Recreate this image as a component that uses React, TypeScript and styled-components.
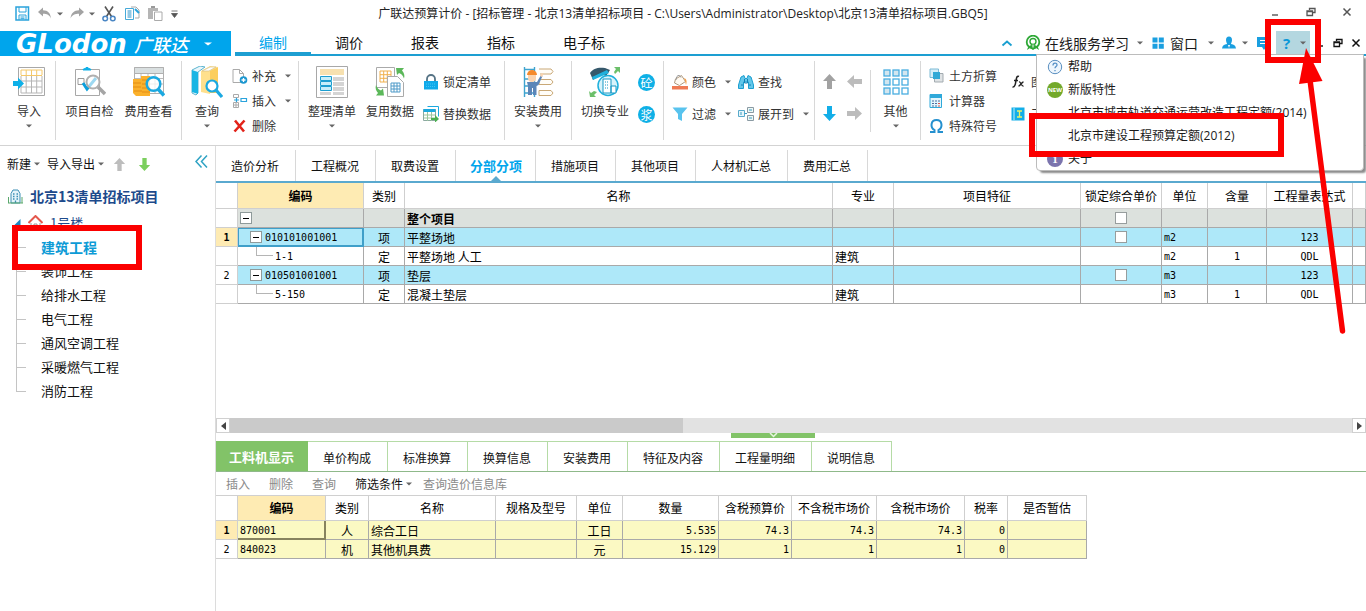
import React from "react";
import styled, { createGlobalStyle, css } from "styled-components";

const GlobalStyle = createGlobalStyle`
  * { box-sizing: border-box; }
  body {
    margin: 0;
    background: #fff;
    color: #1a1a1a;
    font-family: "Noto Sans CJK SC", sans-serif;
    font-size: 12px;
    line-height: 18px;
    overflow: hidden;
  }
  button {
    margin: 0;
    padding: 0;
    border: 0;
    background: none;
    color: inherit;
    font: inherit;
    white-space: nowrap;
  }
  svg { display: block; flex: none; }
`;

const BLUE = "#00a5ec";
const RED = "#fb0000";

/* ---------- shell ---------- */

const Page = styled.div`
  display: flex;
  flex-direction: column;
  min-height: 100vh;
`;

const TitleBar = styled.header`
  display: grid;
  grid-template-columns: 1fr auto 1fr;
  align-items: center;
  height: 31px;
  padding-bottom: 4px;
`;

const QuickAccess = styled.div`
  display: flex;
  align-items: center;
  padding-left: 15px;
`;

const QuickButton = styled.button<{ $gap?: number }>`
  display: flex;
  align-items: center;
  margin-right: ${(p) => p.$gap ?? 8}px;
`;

const WindowTitle = styled.h1`
  margin: 0;
  font-family: "Open Sans", "Noto Sans CJK SC", sans-serif;
  font-size: 12px;
  font-weight: 400;
  color: #222;
  white-space: nowrap;
`;

const WindowButtons = styled.div`
  display: flex;
  justify-content: flex-end;
  align-items: center;
  gap: 26px;
  padding: 0 14px 4px 0;
`;

const MenuBar = styled.div`
  position: relative;
  z-index: 5;
  display: flex;
  height: 25px;
`;

const Brand = styled.button`
  display: flex;
  align-items: center;
  width: 231px;
  padding-left: 16px;
  background: ${BLUE};
  color: #fff;
  text-align: left;
`;

const BrandLatin = styled.span`
  width: 118px;
  font: italic 700 26px/24px "DejaVu Sans", sans-serif;
`;

const BrandHan = styled.span`
  width: 70px;
  font-size: 18px;
  font-style: italic;
  font-weight: 500;
  line-height: 24px;
`;

const MenuRest = styled.div`
  display: flex;
  flex: 1;
  margin-left: 4px;
  border-bottom: 2px solid #1d9fd2;
`;

const MenuTab = styled.button<{ $active?: boolean }>`
  padding: 0 24px;
  font-size: 14px;
  line-height: 20px;
  border-bottom: 2px solid ${(p) => (p.$active ? "#1d9fd2" : "transparent")};
  color: ${(p) => (p.$active ? BLUE : "#111")};
`;

const MenuTools = styled.div`
  display: flex;
  align-items: center;
  margin-left: auto;
  padding-right: 5px;
  font-size: 14px;
`;

const Tool = styled.button<{ $before?: number; $gap?: number }>`
  display: flex;
  align-items: center;
  gap: ${(p) => p.$gap ?? 6}px;
  margin-left: ${(p) => p.$before ?? 8}px;
`;

const ToolLabel = styled.span`
  margin-right: 4px;
`;

const HelpAnchor = styled.div`
  position: relative;
  align-self: stretch;
  display: flex;
  margin-left: 4px;
`;

const HelpButton = styled.button`
  display: flex;
  align-items: center;
  justify-content: space-between;
  width: 34px;
  padding: 0 4px 0 7px;
  background: #b4d7e0;
  color: #0b98d8;
  font: 700 15px/20px "Open Sans", sans-serif;
`;

const Highlight = styled.span<{ $t: number; $r: number; $b: number; $l: number }>`
  position: absolute;
  top: ${(p) => p.$t}px;
  right: ${(p) => p.$r}px;
  bottom: ${(p) => p.$b}px;
  left: ${(p) => p.$l}px;
  z-index: 3;
  border: 6px solid ${RED};
  pointer-events: none;
`;

const Pointer = styled.svg`
  position: absolute;
  top: 15px;
  left: 20px;
  z-index: 4;
  pointer-events: none;
`;

const Dropdown = styled.div`
  position: absolute;
  top: 23px;
  right: 2px;
  width: 328px;
  border: 1px solid #bcbcbc;
  border-radius: 0 0 4px 4px;
  background: #fff;
  box-shadow: 3px 3px 2px -1px #8b8b8b;
  font-family: "Open Sans", "Noto Sans CJK SC", sans-serif;
`;

const DropdownItem = styled.button`
  position: relative;
  display: flex;
  align-items: center;
  gap: 5px;
  width: 100%;
  height: 23px;
  padding-left: 10px;
  text-align: left;
`;

const ItemIcon = styled.span`
  width: 16px;
`;

/* ---------- ribbon ---------- */

const Ribbon = styled.nav`
  display: flex;
  height: 90px;
  padding: 5px 0;
  border-bottom: 1px solid #d3d3d3;
  overflow: hidden;
`;

const Group = styled.section<{ $w?: number; $pl?: number; $short?: boolean }>`
  display: flex;
  flex: none;
  width: ${(p) => (p.$w ? `${p.$w}px` : "auto")};
  height: ${(p) => (p.$short ? 62 : 79)}px;
  margin-top: ${(p) => (p.$short ? 9 : 0)}px;
  padding-left: ${(p) => p.$pl ?? 0}px;
  border-right: ${(p) => (p.$w ? "1px solid #d8d8d8" : "0")};
`;

const Big = styled.button<{ $w: number }>`
  display: flex;
  flex-direction: column;
  align-items: center;
  gap: 4px;
  width: ${(p) => p.$w}px;
  padding-top: 5px;
  color: #333;
`;

const Small = styled.button`
  display: flex;
  align-items: center;
  gap: 4px;
  color: #333;
`;

const SmallCaret = styled.span`
  margin-left: 5px;
`;

const Stack = styled.div<{ $rows: 2 | 3; $ml?: number }>`
  display: grid;
  grid-template-rows: repeat(${(p) => p.$rows}, ${(p) => (p.$rows === 3 ? 25 : 32)}px);
  align-content: start;
  margin-left: ${(p) => p.$ml ?? 0}px;
  padding-top: ${(p) => (p.$rows === 3 ? 2 : 5)}px;
`;

const ArrowGrid = styled.div`
  display: grid;
  grid-template: 25px 40px / 25px 25px;
  align-content: center;
  place-items: center;
  margin-left: 2px;
`;

const Round = styled.span`
  display: flex;
  align-items: center;
  justify-content: center;
  width: 17px;
  height: 17px;
  border-radius: 50%;
  background: #0fb0e6;
  color: #fff;
  font-size: 12px;
  line-height: 17px;
`;

/* ---------- sidebar ---------- */

const Body = styled.div`
  display: flex;
  flex: 1;
`;

const Sidebar = styled.aside`
  flex: none;
  width: 216px;
  border-right: 1px solid #dcdcdc;
`;

const SideTools = styled.div`
  display: flex;
  align-items: center;
  height: 36px;
  padding: 0 7px;
  color: #111;
`;

const SideButton = styled.button<{ $ml?: number }>`
  display: flex;
  align-items: center;
  gap: 3px;
  margin-left: ${(p) => p.$ml ?? 0}px;
`;

const Collapse = styled.button`
  align-self: flex-start;
  margin: 9px 0 0 auto;
`;

const RootRow = styled.button`
  display: flex;
  align-items: center;
  gap: 7px;
  height: 28px;
  padding-left: 8px;
  color: #1d4a8c;
  font-size: 14px;
  font-weight: 700;
`;

const BuildingRow = styled.button`
  display: flex;
  align-items: center;
  height: 25px;
  padding-left: 14px;
  gap: 7px;
  color: #1d4a8c;
  font-size: 13px;
`;

const Tree = styled.ul`
  margin: 0 0 0 16px;
  padding: 0;
  list-style: none;
`;

const Leaf = styled.li<{ $active?: boolean }>`
  position: relative;
  display: flex;
  align-items: center;
  width: 123px;
  height: 24px;
  background:
    linear-gradient(#c4c4c4, #c4c4c4) 0 0 / 1px 100% no-repeat,
    linear-gradient(#c4c4c4, #c4c4c4) 0 12px / 10px 1px no-repeat;
  padding-left: 25px;
  font-size: 13px;
  color: #111;
  &:last-child {
    background-size: 1px 12px, 10px 1px;
  }
  ${(p) =>
    p.$active &&
    css`
      color: #0d9bd6;
      font-size: 14px;
      font-weight: 700;
    `}
`;

/* ---------- main ---------- */

const Main = styled.main`
  display: flex;
  flex: 1;
  flex-direction: column;
  min-width: 0;
`;

const PageTabs = styled.div`
  display: flex;
  height: 37px;
  padding-top: 4px;
  border-bottom: 2px solid #5aa9cf;
`;

const PageTab = styled.button<{ $active?: boolean }>`
  position: relative;
  padding: 0 16px 0 15px;
  border-right: 1px solid #d8d8d8;
  color: ${(p) => (p.$active ? BLUE : "#111")};
  font-size: ${(p) => (p.$active ? 13 : 12)}px;
  font-weight: ${(p) => (p.$active ? 700 : 400)};
  ${(p) =>
    p.$active &&
    css`
      padding: 0 13px 0 14px;
      &::after {
        content: "";
        position: absolute;
        bottom: 0;
        left: 35px;
        border: 5px solid transparent;
        border-top: 0;
        border-bottom-color: #5aa9cf;
      }
    `}
`;

const GridArea = styled.div`
  flex: 1;
  overflow: hidden;
`;

const Grid = styled.table<{ $fill?: boolean }>`
  width: ${(p) => (p.$fill ? "100%" : "871px")};
  border-collapse: separate;
  border-spacing: 0;
  border-top: ${(p) => (p.$fill ? "0" : "1px solid #d0d0d0")};
  table-layout: fixed;
  color: #000;
  th, td {
    overflow: hidden;
    white-space: nowrap;
  }
`;

const Th = styled.th<{ $on?: boolean; $tall?: boolean }>`
  height: ${(p) => (p.$tall ? 26 : 25)}px;
  padding: 0;
  border-right: 1px solid #cfcfcf;
  border-bottom: 1px solid #cfcfcf;
  background: ${(p) => (p.$on ? "#feebb3" : "#fff")};
  font-weight: ${(p) => (p.$on ? 700 : 400)};
`;

const tones = { group: "#dce1dd", item: "#aee8f9", plain: "#fff", cost: "#fbf9c3" };
type Tone = keyof typeof tones;

const Row = styled.tr<{ $tone: Tone }>`
  background: ${(p) => tones[p.$tone]};
`;

const Td = styled.td<{ $align?: "left" | "center" | "right"; $num?: boolean; $bold?: boolean; $sel?: "blue" | "grey" }>`
  height: 19px;
  padding: ${(p) => (p.$align === "center" ? "0" : "0 2px")};
  border-right: 1px solid #a9a9a9;
  border-bottom: 1px solid #a9a9a9;
  text-align: ${(p) => p.$align ?? "left"};
  font-weight: ${(p) => (p.$bold ? 700 : 400)};
  line-height: 17px;
  ${(p) => p.$num && 'font-family: "DejaVu Sans Mono", monospace; font-size: 10px;'}
  ${(p) => p.$sel === "blue" && "box-shadow: inset 0 0 0 1px #3f9fc9; border-color: #3f9fc9;"}
  ${(p) => p.$sel === "grey" && "box-shadow: inset -1px -1px 0 #87835f; border-color: #87835f;"}
`;

const RowHead = styled(Td)<{ $on?: boolean }>`
  background: ${(p) => (p.$on ? "#feebb3" : "#fff")};
  border-color: #cfcfcf;
`;

const CodeCell = styled.div<{ $level: 0 | 1 | 2 }>`
  display: flex;
  align-items: center;
  gap: ${(p) => (p.$level === 2 ? 2 : 3)}px;
  height: 18px;
  padding-left: ${(p) => [0, 10, 16][p.$level]}px;
`;

const Expander = styled.button`
  width: 12px;
  height: 12px;
  border: 1px solid #8e9a9a;
  background: linear-gradient(#000, #000) center / 6px 1px no-repeat #fff;
`;

const Elbow = styled.span`
  align-self: flex-start;
  width: 17px;
  height: 9px;
  border: solid #b5b5b5;
  border-width: 0 0 1px 1px;
`;

const Check = styled.input`
  display: block;
  appearance: none;
  width: 12px;
  height: 12px;
  margin: 0 auto;
  border: 1px solid #979d9d;
  background: #fff;
`;

const ScrollBar = styled.div`
  display: flex;
  height: 15px;
  background: #e2e2e2;
`;

const ScrollButton = styled.button`
  display: flex;
  align-items: center;
  justify-content: center;
  width: 14px;
  border: 1px solid #d0d0d0;
  background: #fff;
`;

const ScrollTrack = styled.div`
  flex: 1;
`;

const ScrollThumb = styled.div`
  width: 40.4%;
  height: 15px;
  background: #cacaca;
`;

const Splitter = styled.div`
  display: flex;
  justify-content: center;
  height: 8px;
  padding-right: 36px;
`;

const SplitHandle = styled.button`
  display: flex;
  justify-content: center;
  width: 84px;
  height: 5px;
  background: #82c368;
`;

const Detail = styled.section`
  height: 170px;
`;

const DetailTabs = styled.div`
  display: flex;
  height: 31px;
  border-bottom: 1px solid #8fb98a;
`;

const DetailTab = styled.button<{ $active?: boolean }>`
  padding: 2px 16px 0 15px;
  border-top: 1px solid #b5dba6;
  border-right: 1px solid #b5dba6;
  color: #111;
  ${(p) =>
    p.$active &&
    css`
      padding: 0 13px;
      border-color: #82c368;
      background: #82c368;
      color: #fff;
      font-size: 13px;
      font-weight: 700;
    `}
`;

const DetailTools = styled.div`
  display: flex;
  align-items: center;
  gap: 19px;
  height: 23px;
  padding-left: 10px;
`;

const DetailButton = styled.button<{ $strong?: boolean }>`
  display: flex;
  align-items: center;
  gap: 3px;
  color: ${(p) => (p.$strong ? "#111" : "#8a8a8a")};
  ${(p) => p.$strong && "margin-right: -8px;"}
`;

/* ---------- icons ---------- */

const Caret = ({ color = "#666", w = 6 }: { color?: string; w?: number }) => (
  <svg width={w} height="4" viewBox="0 0 6 4" preserveAspectRatio="none" aria-hidden="true">
    <path d="M0 0.500h6L3 3.500z" fill={color} />
  </svg>
);

const Ic = ({ s = 16, h, children }: { s?: number; h?: number; children: React.ReactNode }) => (
  <svg width={s} height={h ?? s} viewBox={`0 0 ${s} ${h ?? s}`} fill="none" aria-hidden="true">
    {children}
  </svg>
);

const SaveIcon = () => (
  <Ic s={15}>
    <path d="M1 1h12.500v13H1z" stroke="#2aa3dc" strokeWidth="1.500" />
    <path d="M4 1v5h7V1M4 14V9h7v5M5.500 11h4M5.500 12.700h4" stroke="#2aa3dc" />
  </Ic>
);
const UndoIcon = () => (
  <Ic s={14}>
    <path d="M0 5L5 0.500v2.700c5 0 7.500 3 8 8.300C11.500 8 9 6.800 5 6.800v2.700z" fill="#a3a3a3" />
  </Ic>
);
const RedoIcon = () => (
  <Ic s={14}>
    <path d="M14 5L9 0.500v2.700c-5 0-8 3-8.500 8.300C2 8 5 6.800 9 6.800v2.700z" fill="#a3a3a3" />
  </Ic>
);
const CutIcon = () => (
  <Ic s={14} h={16}>
    <path d="M3 0.500L9.500 10.500M11 0.500L4.500 10.500" stroke="#555" strokeWidth="1.600" />
    <circle cx="3.200" cy="12.500" r="2.300" stroke="#4a86c4" strokeWidth="1.500" />
    <circle cx="10.800" cy="12.500" r="2.300" stroke="#4a86c4" strokeWidth="1.500" />
  </Ic>
);
const CopyIcon = () => (
  <Ic s={15}>
    <path d="M6 1h5l3 3v8h-4" stroke="#a9a9a9" fill="#fff" />
    <path d="M0.500 2.500h8v11h-8z" stroke="#45a9d8" fill="#fff" />
    <path d="M2.500 5h4M2.500 7h4M2.500 9h4M2.500 11h4" stroke="#2490c9" />
    <path d="M10 3l4 4" stroke="#2aa3dc" strokeWidth="2" />
  </Ic>
);
const PasteIcon = () => (
  <Ic s={15}>
    <path d="M0 2h10v3H5v8H0z" fill="#b5b5b5" />
    <path d="M3 0h4v2H3z" fill="#999" />
    <path d="M6.500 6h7.500v8.500H6.500z" stroke="#aaa" fill="#fff" />
  </Ic>
);
const MinIcon = ({ color = "#555" }: { color?: string }) => (
  <Ic s={10}>
    <path d="M2 8h6" stroke={color} strokeWidth="1.400" />
  </Ic>
);
const RestoreIcon = ({ color = "#555" }: { color?: string }) => (
  <Ic s={10}>
    <path d="M3.500 3V1.500h5.500v4H7" stroke={color} strokeWidth="1.300" />
    <path d="M1 4h5.500v4.500H1zM1 4.500h5.500" stroke={color} strokeWidth="1.300" />
  </Ic>
);
const CloseIcon = ({ color = "#555" }: { color?: string }) => (
  <Ic s={10}>
    <path d="M1.500 1.500l7 7M8.500 1.500l-7 7" stroke={color} strokeWidth="1.500" />
  </Ic>
);

const ImportIcon = () => (
  <Ic s={32}>
    <path d="M5.500 1.500h26v28h-26z" stroke="#a8a8a8" />
    <path d="M8 4h21M8 9.500h21M8 4v5M13.200 4v5M18.500 4v5M23.700 4v5M29 4v5" stroke="#f4c86a" />
    <path d="M8 15h21M8 21h21M8 27h21M8 10v17M13.200 10v17M18.500 10v17M23.700 10v17M29 10v17" stroke="#b5b5b5" />
    <path d="M0 15h5v-3.500l6 6-6 6V20H0z" fill="#0eb0e8" />
  </Ic>
);
const SelfCheckIcon = () => (
  <Ic s={32}>
    <path d="M1.500 3.500h24v26h-24z" stroke="#a8a8a8" fill="#fff" />
    <path d="M9 4c0-2 3-1 4-3 1 2 4 1 4 3z" fill="#0eb0e8" stroke="#0eb0e8" />
    <path d="M4 12.500h6v6H4z" stroke="#999" />
    <path d="M9 17l4 6 9-11" stroke="#0a9fdc" strokeWidth="3" />
    <circle cx="19" cy="16" r="6.500" stroke="#b0b0b0" strokeWidth="2" fill="#fff" fillOpacity=".6" />
    <path d="M24 21l7 7" stroke="#a5a5a5" strokeWidth="3.500" />
  </Ic>
);
const CostIcon = () => (
  <Ic s={32}>
    <path d="M1.500 1.500h29v26h-29z" stroke="#b0b0b0" />
    <path d="M1.500 1.500h29v6h-29z" fill="#d9dfe0" stroke="#b0b0b0" />
    <path d="M2 12.500h28M2 18h28M8 8v19M15 8v19M22 8v19" stroke="#bbb" />
    <path d="M0 13h8v-3h9v20H3l-3-3z" fill="#fbb12c" />
    <path d="M0 17h8M0 21h8M1 25h8M9 14h8M9 18h8M9 22h8M9 26h8" stroke="#e38d14" />
    <circle cx="20.500" cy="18" r="6.800" stroke="#1ba9e1" strokeWidth="2.500" fill="#fff" fillOpacity=".75" />
    <path d="M25 23l6 6.500" stroke="#1ba9e1" strokeWidth="3.500" />
  </Ic>
);
const QueryIcon = () => (
  <Ic s={32}>
    <path d="M1 4l8-4 5 1-7 5v21l-2 2-4-2z" fill="#e9f6fb" stroke="#5cb4cf" />
    <path d="M1 4l6 2v22l-6-2z" fill="#18b5e4" />
    <path d="M10 5l9-5 8 1-8 5v22l-9-2z" fill="#ffe08d" />
    <path d="M19 5l8-4v26h-8z" fill="#fcce5c" />
    <path d="M11 5l8-4 6 0-7 4z" fill="#fff" stroke="#d5c08a" strokeWidth=".7" />
    <circle cx="21" cy="20" r="5.500" stroke="#1ba9e1" strokeWidth="2.200" fill="#fff" />
    <path d="M25 24l6 7" stroke="#1ba9e1" strokeWidth="3.200" />
  </Ic>
);
const AddDocIcon = () => (
  <Ic>
    <path d="M1 1.500h6.500l4 4v9H1z" stroke="#aaa" fill="#fff" />
    <path d="M7.500 1.500v4h4" stroke="#aaa" />
    <circle cx="11.500" cy="12" r="3.800" fill="#1c97d0" />
    <path d="M11.500 10v4M9.500 12h4" stroke="#fff" strokeWidth="1.300" />
  </Ic>
);
const InsertIcon = () => (
  <Ic>
    <path d="M1.500 1.500h5v3h-5zM1.500 9.500h5v5h-5zM1.500 12h5M4 9.500v5" stroke="#aaa" />
    <path d="M9 5.500h5.500v3H9zM2 7h5M4.500 5v4" stroke="#2aa3dc" strokeWidth="1.200" />
  </Ic>
);
const DeleteIcon = () => (
  <Ic>
    <path d="M3 2.500l9 11M12.500 2.500l-10 11" stroke="#e2231a" strokeWidth="2.600" />
  </Ic>
);
const TidyIcon = () => (
  <Ic s={32}>
    <path d="M0.500 0.500h31v31h-31z" stroke="#a8a8a8" fill="#fff" />
    <path d="M4 3h24v6H4z" fill="#f7e1b0" />
    <path d="M17 11h11v4H17zM17 16h11v4H17zM17 21h11v4H17zM17 26h11v3H17zM4 26h11v3H4z" fill="#d4d4d4" />
    <path d="M4.500 10.500h11v4h-11zM4.500 15.500h11v4h-11zM4.500 20.500h11v4h-11z" fill="#c5eefa" stroke="#1c9ed0" />
  </Ic>
);
const ReuseIcon = () => (
  <Ic s={32}>
    <path d="M2.500 1.500h18v20h-18z" stroke="#aaa" fill="#fff" />
    <path d="M6 5h11v11H6zM6 8.700h11M6 12.300h11M9.700 5v11M13.300 5v11" stroke="#f0b04c" />
    <path d="M13.500 10.500h10l6 6v14h-16z" stroke="#aaa" fill="#fff" />
    <path d="M17 17h9v9h-9zM17 20h9M17 23h9M20 17v9M23 17v9" stroke="#4e9ac8" />
    <path d="M22 2h8l-2 2.500c2 2 3 5 2 8-1-3-3-5-5-5.500l-2 2z" fill="#5cb85a" />
    <path d="M10 29.500H2l2-2.500c-2-2-3-5-2-8 1 3 3 5 5 5.500l2-2z" fill="#5cb85a" />
  </Ic>
);
const LockIcon = () => (
  <Ic>
    <path d="M4 7V5a4 4 0 018 0v2" stroke="#567385" strokeWidth="1.800" />
    <path d="M1 7h14v8.500H1z" fill="#10aaea" />
    <path d="M3 10h10M3 12.500h10" stroke="#46c4f4" strokeDasharray="1 1" />
  </Ic>
);
const ReplaceIcon = () => (
  <Ic>
    <path d="M4.500 0.500h11v10" stroke="#1ca9df" />
    <path d="M0.500 3.500h12v11H0.500z" stroke="#8ba9a0" fill="#fff" />
    <path d="M0.500 3h12v3H0.500z" fill="#1ca9df" />
    <path d="M1 9h11M1 12h11M4.500 6v9M8.500 6v9" stroke="#9cc59c" />
    <path d="M8 12h4V9l4 4-4 3.500V14H8z" fill="#4caf50" />
  </Ic>
);
const InstallIcon = () => (
  <Ic s={32}>
    <path d="M2.500 1v30M12.500 1v30M2.500 3.500h10M2.500 13h10M2.500 20h10M2.500 27h10" stroke="#3fa4cf" strokeWidth="1.400" />
    <path d="M17 3h12l2 2.500-2 2.500H18M17 13.500h12l2 2.500-2 2.500H17zM17 24.500h12l2 2.500-2 2.500H17z" stroke="#c9a876" fill="#fffdf8" />
    <path d="M5 9a5 5 0 0110 0z" fill="#f58a2c" />
    <path d="M6 9h8v3a4 4 0 01-8 0z" fill="#fbd3ae" />
    <path d="M5 16h10l4-7 1.500 1-4 9-2 1v9H11v-7h-1v7H6v-9z" fill="#5b86b8" />
    <path d="M18 10l2-3 1.500 1-1.500 3z" fill="#fbd3ae" />
  </Ic>
);
const SwitchIcon = () => (
  <Ic s={32}>
    <path d="M1 7c3-5 9-6 15-5l5 2-4 6-5-2-8 6z" fill="#35586b" />
    <path d="M3 11l15-7 2 3-16 7z" fill="#1fb0dc" />
    <circle cx="19" cy="19.500" r="10" fill="#d8f3fb" stroke="#1fb0dc" strokeWidth="1.500" />
    <path d="M14 13h8v14h-8zM22 20h5v7h-5z" fill="#fff" stroke="#1797c4" />
    <path d="M16 16h4M16 19h4M16 22h4" stroke="#1797c4" strokeDasharray="1 1" />
    <path d="M25 1h6v6l-2-2-3 3-1-2 2-3zM0 25l1 6h6l-2-2 3-3-3-1-3 2z" fill="#6cbf6a" />
  </Ic>
);
const ColorIcon = () => (
  <Ic>
    <path d="M3.500 5l6-3.500 4 6-6 4-5-2.500z" stroke="#b09a80" fill="#fffaf2" />
    <path d="M4 6c0-5 4-6 5-2.500" stroke="#9a9a9a" />
    <path d="M12 4c3 1 3 4 2 7l-1-4z" fill="#f3a04b" />
    <path d="M0 12h16v3.500H0z" fill="#ef7a53" />
  </Ic>
);
const FindIcon = () => (
  <Ic>
    <path d="M3 3l3-1.500 1 3h2l1-3L13 3l2.500 8v3.500h-5V8h-5v6.500h-5V11z" fill="#62c7ea" stroke="#1c9ed0" />
    <path d="M6.500 5v4h3V5M3 11h2M11 11h2" stroke="#1780b4" />
  </Ic>
);
const FilterIcon = () => (
  <Ic>
    <path d="M0.500 1.500h15L10 8v7l-4-2V8z" fill="#58c3ee" />
  </Ic>
);
const ExpandIcon = () => (
  <Ic>
    <path d="M0.500 4.500h6v6h-6z" stroke="#58aacb" fill="#e7f6fb" />
    <path d="M9.500 1.500h6v5h-6zM9.500 9.500h6v5h-6z" stroke="#8a9aa3" fill="#eef8f6" />
    <path d="M6.500 7.500H9M11 12h3M11 4h3M3 6v3" stroke="#3a9dc2" />
  </Ic>
);
const Arrow = ({ turn, color, s = 15 }: { turn: number; color: string; s?: number }) => (
  <svg width={s} height={s} viewBox="0 0 15 15" aria-hidden="true">
    <path transform={`rotate(${turn} 7.500 7.500)`} d="M7.500 0L14 7h-4v8H5V7H1z" fill={color} />
  </svg>
);
const OtherIcon = () => (
  <Ic s={26} h={32}>
    {[4, 13, 22].map((y) =>
      [0, 9, 18].map((x) => (
        <rect key={`${x}-${y}`} x={x + 1} y={y} width="6" height="6" stroke="#4aaee0" strokeWidth="1.300" fill={y === 4 || x === 0 ? "#d3e6ef" : "#fff"} />
      ))
    )}
  </Ic>
);
const EarthIcon = () => (
  <Ic>
    <path d="M1 1h8.500v8.500H1z" fill="#d6eef8" stroke="#7dbad5" />
    <path d="M5.500 5.500H14V14H5.500z" fill="#dfe3e5" stroke="#a3abb0" />
    <path d="M4 4h7v7H4z" fill="#33a9d6" />
  </Ic>
);
const CalcIcon = () => (
  <Ic>
    <path d="M1 1.500h11.500v13H1z" fill="#e3f6fd" stroke="#2fa9da" />
    <path d="M1 1h12v4H1z" fill="#2fa9da" />
    <path d="M3 8h2M6 8h2M9 8h2M3 10.500h2M6 10.500h2M3 13h2M6 13h2" stroke="#4c6ea0" />
    <path d="M9 10.500h2M9 13h2" stroke="#e0524d" />
  </Ic>
);
const OmegaIcon = () => (
  <Ic>
    <path d="M1 14h4.500v-2C1 9.500 1.500 2 7.500 2s6.500 7.500 2 10v2H14" stroke="#2490cf" strokeWidth="2" />
  </Ic>
);
const ToolboxIcon = () => (
  <Ic>
    <path d="M0.500 1.500h13v13h-13z" fill="#13aee8" />
    <path d="M3 2v12" stroke="#bfeeff" />
    <path d="M6 5h5M8.500 5v6M6 11h5" stroke="#e9f46a" strokeWidth="1.300" />
  </Ic>
);
const FxIcon = () => (
  <Ic>
    <path d="M8 2.500c-2-1-2.500 1-3 4s-1 7-3.500 6.500M3 6.500h4" stroke="#222" strokeWidth="1.500" />
    <path d="M8 8c2-.5 2 4.500 4.500 4M12.500 8C10.500 8 9.500 12 7.500 12" stroke="#222" strokeWidth="1.300" />
  </Ic>
);
const OnlineIcon = () => (
  <Ic>
    <circle cx="8" cy="7" r="6.300" stroke="#2ea836" strokeWidth="1.800" />
    <circle cx="8" cy="6.500" r="3" stroke="#2ea836" strokeWidth="1.400" />
    <path d="M2 15c1-4 3-5 6-5s5 1 6 5l-3-2-3 2-3-2z" fill="#2ea836" />
    <path d="M8 9.500v3" stroke="#fff" />
  </Ic>
);
const WindowsIcon = () => (
  <Ic s={12}>
    <path d="M0.500 0.500h5v5h-5zM6.800 0.500h5v5h-5zM0.500 6.800h5v5h-5zM6.800 6.800h5v5h-5z" fill="#1a9fe0" />
  </Ic>
);
const PersonIcon = () => (
  <Ic s={14}>
    <path d="M4 4a3 3.500 0 016 0c0 2-1 3-1 4 3 .5 4.500 1.500 5 4.500H0C.5 9.500 2 8.500 5 8 5 7 4 6 4 4z" fill="#1a9fe0" />
    <path d="M6 9h2l-1 3z" fill="#fff" />
  </Ic>
);
const CommentIcon = () => (
  <Ic>
    <path d="M1 2h14v10h-5l-2 3-2-3H1z" fill="#1a9fe0" />
    <path d="M4 5.500h8M4 8.500h8" stroke="#fff" />
  </Ic>
);
const HelpIcon = () => (
  <Ic>
    <circle cx="8" cy="8" r="6.700" stroke="#5a8fc0" fill="#eef6fd" />
    <path d="M6 6.500c0-3 4-3 4-.6 0 1.600-2 1.600-2 3.400M8 11v1.300" stroke="#5a93c8" strokeWidth="1.300" />
  </Ic>
);

const NewBadge = styled.span`
  display: block;
  width: 16px;
  height: 16px;
  border-radius: 50%;
  background: #73a92b;
  color: #fff;
  font: 700 6px/16px "Open Sans", sans-serif;
  text-align: center;
`;
const AboutBadge = styled(NewBadge)`
  background: #7b74ad;
  font: 700 11px/16px "Liberation Serif", serif;
`;

const BuildingIcon = () => (
  <Ic s={15}>
    <path d="M3 4.500L5 1h5l2 3.500V14H3z" fill="#e4f4fa" stroke="#3c8fb5" />
    <path d="M5 5h1.500M8.500 5H10M5 7.500h1.500M8.500 7.500H10M5 10h1.500M8.500 10H10M7.500 11.500V14" stroke="#3c8fb5" strokeWidth="1.300" />
    <path d="M0.500 8v6M14 8v6M0 14h15" stroke="#5aa86c" />
  </Ic>
);
const HouseIcon = () => (
  <Ic s={15}>
    <path d="M0.500 8L7.500 1l7 7" stroke="#e4574c" strokeWidth="2" />
    <path d="M3 8v6h9V8M6 14V9h3v5" stroke="#9a9a9a" />
  </Ic>
);

/* ---------- data ---------- */

type Line = {
  n?: string;
  level: 0 | 1 | 2;
  tone: Tone;
  code?: string;
  kind?: string;
  name: string;
  major?: string;
  check?: boolean;
  unit?: string;
  amount?: string;
  expr?: string;
};

const lines: Line[] = [
  { level: 0, tone: "group", name: "整个项目", check: true },
  { n: "1", level: 1, tone: "item", code: "010101001001", kind: "项", name: "平整场地", check: true, unit: "m2", expr: "123" },
  { level: 2, tone: "plain", code: "1-1", kind: "定", name: "平整场地  人工", major: "建筑", unit: "m2", amount: "1", expr: "QDL" },
  { n: "2", level: 1, tone: "item", code: "010501001001", kind: "项", name: "垫层", check: true, unit: "m3", expr: "123" },
  { level: 2, tone: "plain", code: "5-150", kind: "定", name: "混凝土垫层", major: "建筑", unit: "m3", amount: "1", expr: "QDL" },
];

const mainCols: [string, number][] = [
  ["", 22], ["编码", 126], ["类别", 41], ["名称", 428], ["专业", 61], ["项目特征", 187],
  ["锁定综合单价", 81], ["单位", 46], ["含量", 59], ["工程量表达式", 86],
];

const costCols: [string, number][] = [
  ["", 22], ["编码", 88], ["类别", 43], ["名称", 127], ["规格及型号", 81], ["单位", 46], ["数量", 96],
  ["含税预算价", 73], ["不含税市场价", 85], ["含税市场价", 88], ["税率", 43], ["是否暂估", 79],
];

const costs = [
  ["1", "870001", "人", "综合工日", "", "工日", "5.535", "74.3", "74.3", "74.3", "0", ""],
  ["2", "840023", "机", "其他机具费", "", "元", "15.129", "1", "1", "1", "0", ""],
];

const leaves = ["建筑工程", "装饰工程", "给排水工程", "电气工程", "通风空调工程", "采暖燃气工程", "消防工程"];
const pageTabs = ["造价分析", "工程概况", "取费设置", "分部分项", "措施项目", "其他项目", "人材机汇总", "费用汇总"];
const detailTabs = ["工料机显示", "单价构成", "标准换算", "换算信息", "安装费用", "特征及内容", "工程量明细", "说明信息"];

/* ---------- parts ---------- */

const BigButton = ({ icon, label, w = 58, caret }: { icon: React.ReactNode; label: string; w?: number; caret?: boolean }) => (
  <Big $w={w}>
    {icon}
    <span>{label}</span>
    {caret && <Caret />}
  </Big>
);

const SmallButton = ({ icon, label, caret }: { icon: React.ReactNode; label: string; caret?: boolean }) => (
  <Small>
    {icon}
    <span>{label}</span>
    {caret && (
      <SmallCaret>
        <Caret />
      </SmallCaret>
    )}
  </Small>
);

export default function App() {
  return (
    <Page>
      <GlobalStyle />
      <TitleBar>
        <QuickAccess>
          <QuickButton aria-label="保存"><SaveIcon /></QuickButton>
          <QuickButton aria-label="撤销" $gap={5}><UndoIcon /></QuickButton>
          <QuickButton aria-label="撤销列表" $gap={7}><Caret /></QuickButton>
          <QuickButton aria-label="恢复" $gap={5}><RedoIcon /></QuickButton>
          <QuickButton aria-label="恢复列表" $gap={7}><Caret /></QuickButton>
          <QuickButton aria-label="剪切" $gap={9}><CutIcon /></QuickButton>
          <QuickButton aria-label="复制"><CopyIcon /></QuickButton>
          <QuickButton aria-label="粘贴"><PasteIcon /></QuickButton>
          <QuickButton aria-label="自定义">
            <Ic s={7} h={8}><path d="M0.500 1h6M0.500 3.500h6L3.500 7.500z" stroke="#555" fill="#555" strokeWidth=".8" /></Ic>
          </QuickButton>
        </QuickAccess>
        <WindowTitle>广联达预算计价 - [招标管理 - 北京13清单招标项目 - C:\Users\Administrator\Desktop\北京13清单招标项目.GBQ5]</WindowTitle>
        <WindowButtons>
          <button aria-label="最小化"><MinIcon /></button>
          <button aria-label="还原"><RestoreIcon /></button>
          <button aria-label="关闭"><CloseIcon /></button>
        </WindowButtons>
      </TitleBar>

      <MenuBar>
        <Brand>
          <BrandLatin>GLodon</BrandLatin>
          <BrandHan>广联达</BrandHan>
          <Caret color="#fff" w={8} />
        </Brand>
        <MenuRest>
          {["编制", "调价", "报表", "指标", "电子标"].map((t, i) => (
            <MenuTab key={t} $active={i === 0}>{t}</MenuTab>
          ))}
          <MenuTools>
            <Tool aria-label="收起">
              <Ic s={12}><path d="M1.500 8.500L6 4.500l4.500 4" stroke="#1a9fd0" strokeWidth="1.800" /></Ic>
            </Tool>
            <Tool $before={12} $gap={4}><OnlineIcon /><ToolLabel>在线服务学习</ToolLabel><Caret /></Tool>
            <Tool $before={9}><WindowsIcon /><ToolLabel>窗口</ToolLabel><Caret /></Tool>
            <Tool aria-label="用户"><PersonIcon /><Caret /></Tool>
            <Tool aria-label="消息"><CommentIcon /></Tool>
            <HelpAnchor>
              <HelpButton aria-label="帮助">?<Caret /></HelpButton>
              <Highlight $t={-12} $r={-11} $b={-9} $l={-11} />
              <Pointer width="52" height="292" viewBox="0 0 52 292" aria-hidden="true">
                <path d="M14 34L46.500 285" stroke={RED} strokeWidth="5.500" strokeLinecap="round" />
                <path d="M10 2L26.500 35L3 38z" fill={RED} />
              </Pointer>
            </HelpAnchor>
            <Tool aria-label="最小化子窗口" $before={5}><MinIcon color="#111" /></Tool>
            <Tool aria-label="还原子窗口"><RestoreIcon color="#111" /></Tool>
            <Tool aria-label="关闭子窗口"><CloseIcon color="#111" /></Tool>
          </MenuTools>
        </MenuRest>
        <Dropdown>
          <DropdownItem><ItemIcon><HelpIcon /></ItemIcon>帮助</DropdownItem>
          <DropdownItem><ItemIcon><NewBadge>NEW</NewBadge></ItemIcon>新版特性</DropdownItem>
          <DropdownItem><ItemIcon />北京市城市轨道交通运营改造工程定额(2014)</DropdownItem>
          <DropdownItem>
            <ItemIcon />北京市建设工程预算定额(2012)
            <Highlight $t={-11} $r={79} $b={-10} $l={-8} />
          </DropdownItem>
          <DropdownItem><ItemIcon><AboutBadge>1</AboutBadge></ItemIcon>关于</DropdownItem>
        </Dropdown>
      </MenuBar>

      <Ribbon>
        <Group $w={56} $pl={3}><BigButton icon={<ImportIcon />} label="导入" w={52} caret /></Group>
        <Group $w={126} $pl={4}>
          <BigButton icon={<SelfCheckIcon />} label="项目自检" w={59} />
          <BigButton icon={<CostIcon />} label="费用查看" w={59} />
        </Group>
        <Group $w={117}>
          <BigButton icon={<QueryIcon />} label="查询" w={50} caret />
          <Stack $rows={3}>
            <SmallButton icon={<AddDocIcon />} label="补充" caret />
            <SmallButton icon={<InsertIcon />} label="插入" caret />
            <SmallButton icon={<DeleteIcon />} label="删除" />
          </Stack>
        </Group>
        <Group $w={206} $pl={4}>
          <BigButton icon={<TidyIcon />} label="整理清单" caret />
          <BigButton icon={<ReuseIcon />} label="复用数据" />
          <Stack $rows={2} $ml={4}>
            <SmallButton icon={<LockIcon />} label="锁定清单" />
            <SmallButton icon={<ReplaceIcon />} label="替换数据" />
          </Stack>
        </Group>
        <Group $w={67} $pl={4}><BigButton icon={<InstallIcon />} label="安装费用" caret /></Group>
        <Group $w={92} $pl={4}>
          <BigButton icon={<SwitchIcon />} label="切换专业" />
          <Stack $rows={2} $ml={4}>
            <Small><Round>砼</Round></Small>
            <Small><Round>浆</Round></Small>
          </Stack>
        </Group>
        <Group $w={151} $pl={8}>
          <Stack $rows={2}>
            <SmallButton icon={<ColorIcon />} label="颜色" caret />
            <SmallButton icon={<FilterIcon />} label="过滤" caret />
          </Stack>
          <Stack $rows={2} $ml={7}>
            <SmallButton icon={<FindIcon />} label="查找" />
            <SmallButton icon={<ExpandIcon />} label="展开到" caret />
          </Stack>
        </Group>
        <Group $w={56} $short>
          <ArrowGrid>
            <button aria-label="上移"><Arrow turn={0} color="#a2a2a2" /></button>
            <button aria-label="左移"><Arrow turn={270} color="#bcbcbc" /></button>
            <button aria-label="下移"><Arrow turn={180} color="#12aee8" /></button>
            <button aria-label="右移"><Arrow turn={90} color="#bcbcbc" /></button>
          </ArrowGrid>
        </Group>
        <Group $w={50}><BigButton icon={<OtherIcon />} label="其他" w={49} caret /></Group>
        <Group $pl={8}>
          <Stack $rows={3}>
            <SmallButton icon={<EarthIcon />} label="土方折算" />
            <SmallButton icon={<CalcIcon />} label="计算器" />
            <SmallButton icon={<OmegaIcon />} label="特殊符号" />
          </Stack>
          <Stack $rows={2} $ml={14}>
            <SmallButton icon={<FxIcon />} label="图" />
            <SmallButton icon={<ToolboxIcon />} label="工" />
          </Stack>
        </Group>
      </Ribbon>

      <Body>
        <Sidebar>
          <SideTools>
            <SideButton>新建<Caret /></SideButton>
            <SideButton $ml={7}>导入导出<Caret /></SideButton>
            <SideButton $ml={9} aria-label="上移"><Arrow turn={0} color="#bdbdbd" s={13} /></SideButton>
            <SideButton $ml={12} aria-label="下移"><Arrow turn={180} color="#7ccf5e" s={13} /></SideButton>
            <Collapse aria-label="收起导航">
              <Ic s={13}><path d="M6.500 0.500l-5.500 6 5.500 6M12 0.500l-5.500 6 5.500 6" stroke="#2fa3c4" strokeWidth="1.500" /></Ic>
            </Collapse>
          </SideTools>
          <RootRow><BuildingIcon />北京13清单招标项目</RootRow>
          <BuildingRow>
            <Ic s={7}><path d="M6.500 0v6.500H0z" fill="#1b86c0" /></Ic>
            <HouseIcon />1号楼
          </BuildingRow>
          <Tree>
            {leaves.map((t, i) => (
              <Leaf key={t} $active={i === 0}>
                <button>{t}</button>
                {i === 0 && <Highlight $t={-10} $r={-3} $b={-11} $l={-4} />}
              </Leaf>
            ))}
          </Tree>
        </Sidebar>

        <Main>
          <PageTabs>
            {pageTabs.map((t) => (
              <PageTab key={t} $active={t === "分部分项"}>{t}</PageTab>
            ))}
          </PageTabs>
          <GridArea>
            <Grid $fill>
              <colgroup>
                {mainCols.map(([t, w]) => (
                  <col key={t} width={w} />
                ))}
                <col />
              </colgroup>
              <thead>
                <tr>
                  {mainCols.map(([t]) => (
                    <Th key={t} $on={t === "编码"} $tall>{t}</Th>
                  ))}
                  <Th $tall />
                </tr>
              </thead>
              <tbody>
                {lines.map((r, i) => (
                  <Row key={i} $tone={r.tone}>
                    <RowHead $align="center" $num $on={r.n === "1"} $bold={r.n === "1"}>{r.n}</RowHead>
                    <Td $num $sel={r.n === "1" ? "blue" : undefined}>
                      <CodeCell $level={r.level}>
                        {r.level === 2 ? <Elbow /> : <Expander aria-label="折叠" />}
                        {r.code}
                      </CodeCell>
                    </Td>
                    <Td $align="center">{r.kind}</Td>
                    <Td $bold={r.level === 0}>{r.name}</Td>
                    <Td>{r.major}</Td>
                    <Td />
                    <Td $align="center">{r.check && <Check type="checkbox" aria-label={`锁定综合单价 ${r.name}`} />}</Td>
                    <Td $num>{r.unit}</Td>
                    <Td $num $align="center">{r.amount}</Td>
                    <Td $num $align="center">{r.expr}</Td>
                    <Td />
                  </Row>
                ))}
              </tbody>
            </Grid>
          </GridArea>

          <ScrollBar>
            <ScrollButton aria-label="向左滚动"><Ic s={5} h={8}><path d="M5 0v8L0 4z" fill="#444" /></Ic></ScrollButton>
            <ScrollTrack><ScrollThumb /></ScrollTrack>
            <ScrollButton aria-label="向右滚动"><Ic s={5} h={8}><path d="M0 0v8l5-4z" fill="#444" /></Ic></ScrollButton>
          </ScrollBar>
          <Splitter>
            <SplitHandle aria-label="收起明细">
              <Ic s={9} h={5}><path d="M1 0l3.500 3.500L8 0" stroke="#e6f5df" strokeWidth="1.500" /></Ic>
            </SplitHandle>
          </Splitter>

          <Detail>
            <DetailTabs>
              {detailTabs.map((t, i) => (
                <DetailTab key={t} $active={i === 0}>{t}</DetailTab>
              ))}
            </DetailTabs>
            <DetailTools>
              <DetailButton>插入</DetailButton>
              <DetailButton>删除</DetailButton>
              <DetailButton>查询</DetailButton>
              <DetailButton $strong>筛选条件<Caret /></DetailButton>
              <DetailButton>查询造价信息库</DetailButton>
            </DetailTools>
            <Grid>
              <colgroup>
                {costCols.map(([t, w]) => (
                  <col key={t} width={w} />
                ))}
              </colgroup>
              <thead>
                <tr>
                  {costCols.map(([t]) => (
                    <Th key={t} $on={t === "编码"}>{t}</Th>
                  ))}
                </tr>
              </thead>
              <tbody>
                {costs.map((r, i) => (
                  <Row key={r[1]} $tone="cost">
                    <RowHead $align="center" $num $on={i === 0} $bold={i === 0}>{r[0]}</RowHead>
                    {r.slice(1).map((v, c) => (
                      <Td
                        key={c}
                        $num={c === 0 || c > 4}
                        $align={c === 1 || c === 4 ? "center" : c > 4 ? "right" : "left"}
                        $sel={c === 0 && i === 0 ? "grey" : undefined}
                      >
                        {v}
                      </Td>
                    ))}
                  </Row>
                ))}
              </tbody>
            </Grid>
          </Detail>
        </Main>
      </Body>
    </Page>
  );
}
